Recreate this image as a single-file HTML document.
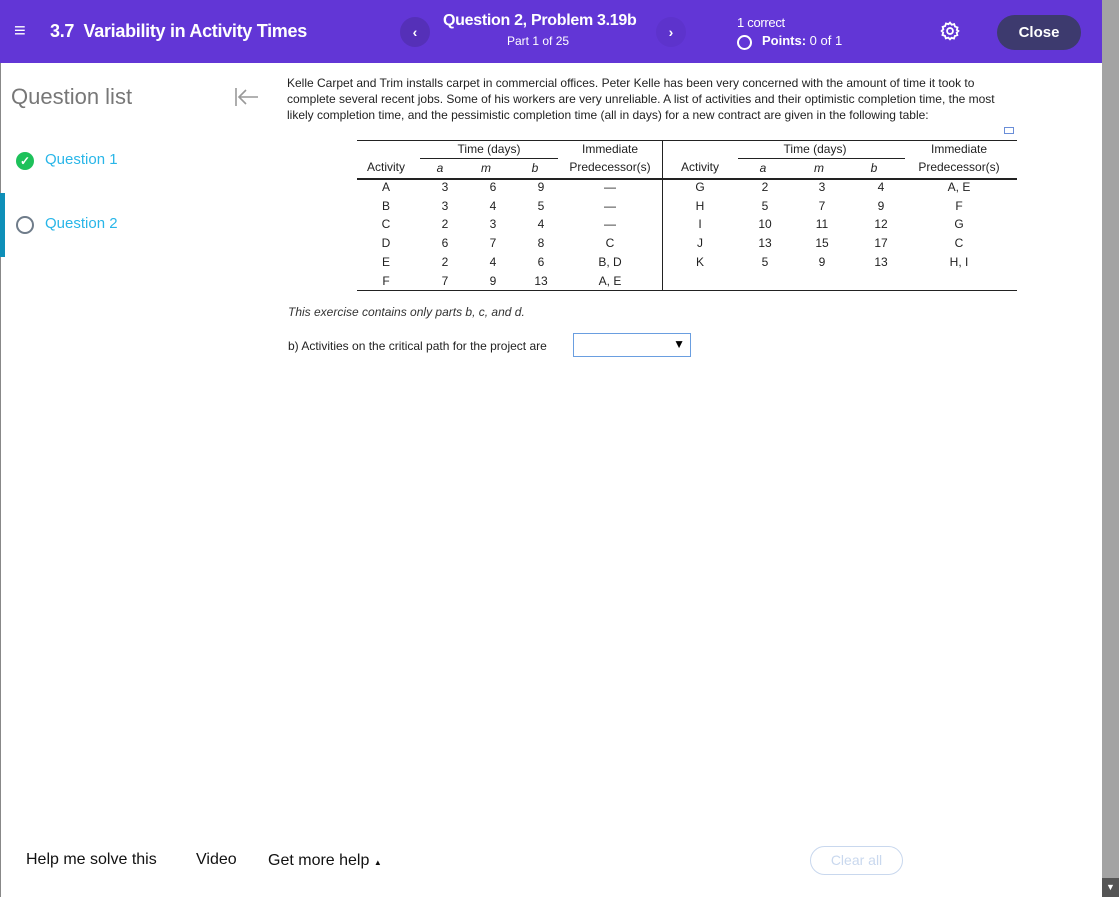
<!DOCTYPE html>
<html><head><style>
body{margin:0;width:1119px;height:897px;overflow:hidden;font-family:"Liberation Sans",sans-serif;background:#fff;position:relative}
.hdr{position:absolute;left:0;top:0;width:1102px;height:63px;background:#6236d6;color:#fff}
.a{position:absolute;white-space:nowrap}
.c{position:absolute;transform:translateX(-50%);white-space:nowrap;font-size:12px;color:#222}
.hl{position:absolute;background:#222}
</style></head><body>
<div class="hdr">
 <div class="a" style="left:14px;top:22px;font-size:20px;line-height:18px">&#8801;</div>
 <div class="a" style="left:50px;top:21px;font-size:18px;font-weight:bold;letter-spacing:-0.3px">3.7&nbsp; Variability in Activity Times</div>
 <div class="a" style="left:400px;top:17px;width:30px;height:30px;border-radius:50%;background:#5530b8;text-align:center;line-height:30px;font-size:14px;font-weight:bold">‹</div>
 <div class="a" style="left:443px;top:12px;font-size:16px;font-weight:bold;letter-spacing:-0.3px">Question 2, Problem 3.19b</div>
 <div class="a" style="left:507px;top:34px;font-size:12px">Part 1 of 25</div>
 <div class="a" style="left:656px;top:17px;width:30px;height:30px;border-radius:50%;background:#5d33cc;text-align:center;line-height:30px;font-size:14px;font-weight:bold">›</div>
 <div class="a" style="left:737px;top:15px;font-size:13px;letter-spacing:-0.3px">1 correct</div>
 <div class="a" style="left:737px;top:35px;width:11px;height:11px;border:2px solid #fff;border-radius:50%"></div>
 <div class="a" style="left:762px;top:33px;font-size:13px"><b>Points:</b> 0 of 1</div>
 <svg class="a" style="left:940px;top:21px" width="20" height="20" viewBox="0 0 24 24" fill="none" stroke="#fff" stroke-width="2.2"><circle cx="12" cy="12" r="3.5"/><path d="M12 2l2 2.5 3-.8 1 3 3 1-.8 3L22 12l-2 2 .8 3-3 1-1 3-3-.8L12 22l-2-2-3 .8-1-3-3-1 .8-3L2 12l2-2-.8-3 3-1 1-3 3 .8z"/></svg>
 <div class="a" style="left:997px;top:15px;width:84px;height:35px;border-radius:18px;background:#3d3a6e;text-align:center;line-height:35px;font-size:15px;font-weight:bold">Close</div>
</div>
<div class="a" style="left:0;top:63px;width:1px;height:834px;background:#888"></div>
<div class="a" style="left:1102px;top:0;width:17px;height:897px;background:#a3a3a3"></div>
<div class="a" style="left:1102px;top:878px;width:17px;height:19px;background:#555;color:#fff;font-size:9px;text-align:center;line-height:19px">▼</div>
<div class="a" style="left:11px;top:84px;font-size:22px;color:#777">Question list</div>
<svg class="a" style="left:234px;top:86px" width="26" height="22" viewBox="0 0 26 22" fill="none" stroke="#999" stroke-width="1.6"><path d="M2 2v18M24 11H5M12 4l-7 7 7 7"/></svg>
<div class="a" style="left:16px;top:152px;width:18px;height:18px;border-radius:50%;background:#1dc15a;color:#fff;font-size:12px;text-align:center;line-height:18px;font-weight:bold">✓</div>
<div class="a" style="left:45px;top:151px;font-size:15px;color:#29b6e8">Question 1</div>
<div class="a" style="left:0;top:193px;width:5px;height:64px;background:#0e8fb8"></div>
<div class="a" style="left:16px;top:216px;width:14px;height:14px;border-radius:50%;border:2px solid #6f7c8a"></div>
<div class="a" style="left:45px;top:215px;font-size:15px;color:#29b6e8">Question 2</div>
<div class="a" style="left:287px;top:75px;width:770px;font-size:12px;line-height:16px;color:#222;white-space:normal">Kelle Carpet and Trim installs carpet in commercial offices. Peter Kelle has been very concerned with the amount of time it took to<br>complete several recent jobs. Some of his workers are very unreliable. A list of activities and their optimistic completion time, the most<br>likely completion time, and the pessimistic completion time (all in days) for a new contract are given in the following table:</div>
<div class="a" style="left:1004px;top:127px;width:8px;height:5px;border:1px solid #6a8ed8"></div>
<div class="hl" style="left:357px;top:140px;width:660px;height:1px"></div>
<div class="hl" style="left:420px;top:158px;width:138px;height:1px"></div>
<div class="hl" style="left:738px;top:158px;width:167px;height:1px"></div>
<div class="hl" style="left:357px;top:178px;width:660px;height:2px"></div>
<div class="hl" style="left:357px;top:290px;width:660px;height:1px"></div>
<div class="hl" style="left:662px;top:140px;width:1px;height:151px"></div>
<div id="t"></div>
<div class="a" style="left:288px;top:305px;font-size:12px;font-style:italic;color:#333">This exercise contains only parts b, c, and d.</div>
<div class="a" style="left:288px;top:339px;font-size:12px;color:#222">b) Activities on the critical path for the project are</div>
<div class="a" style="left:573px;top:333px;width:118px;height:24px;border:1px solid #6a9ee0;box-sizing:border-box"><span style="position:absolute;right:5px;top:3px;font-size:12px">▼</span></div>
<div class="a" style="left:26px;top:851px;font-size:16px;color:#111">Help me solve this</div>
<div class="a" style="left:196px;top:851px;font-size:16px;color:#111">Video</div>
<div class="a" style="left:268px;top:852px;font-size:16px;color:#111">Get more help <span style="font-size:8px">▲</span></div>
<div class="a" style="left:810px;top:846px;width:93px;height:29px;border:1px solid #c9d8ee;border-radius:15px;box-sizing:border-box;text-align:center;line-height:27px;font-size:14px;color:#c9d8ee">Clear all</div>
<script>
var h=[[386,"Activity",167],[610,"Immediate",149],[610,"Predecessor(s)",167],[489,"Time (days)",149],[700,"Activity",167],[815,"Time (days)",149],[959,"Immediate",149],[959,"Predecessor(s)",167]];
var s="";
h.forEach(function(x){s+='<div class="c" style="left:'+x[0]+'px;top:'+(x[2]-7)+'px">'+x[1]+'</div>';});
[[440,"a"],[486,"m"],[535,"b"],[763,"a"],[819,"m"],[874,"b"]].forEach(function(x){s+='<div class="c" style="left:'+x[0]+'px;top:161px;font-style:italic;font-size:12px">'+x[1]+'</div>';});
var L=[["A",3,6,9,"—"],["B",3,4,5,"—"],["C",2,3,4,"—"],["D",6,7,8,"C"],["E",2,4,6,"B, D"],["F",7,9,13,"A, E"]];
var R=[["G",2,3,4,"A, E"],["H",5,7,9,"F"],["I",10,11,12,"G"],["J",13,15,17,"C"],["K",5,9,13,"H, I"]];
var lx=[386,445,493,541,610],rx=[700,765,822,881,959];
L.forEach(function(r,i){r.forEach(function(v,j){s+='<div class="c" style="left:'+lx[j]+'px;top:'+(180+i*18.7)+'px">'+v+'</div>';});});
R.forEach(function(r,i){r.forEach(function(v,j){s+='<div class="c" style="left:'+rx[j]+'px;top:'+(180+i*18.7)+'px">'+v+'</div>';});});
document.getElementById("t").innerHTML=s;
</script>
</body></html>
